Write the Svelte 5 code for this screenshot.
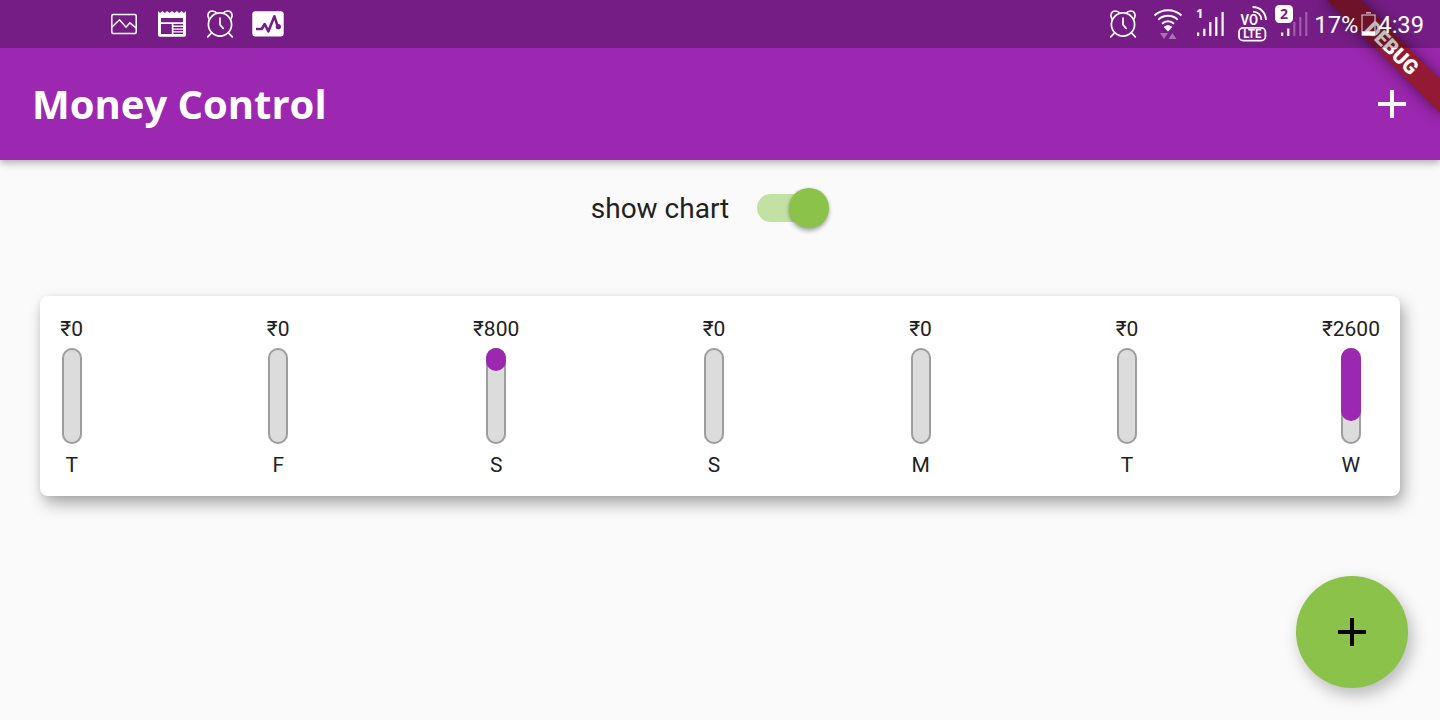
<script>
  const days = [
    { day: 'T', amount: 0 },
    { day: 'F', amount: 0 },
    { day: 'S', amount: 800 },
    { day: 'S', amount: 0 },
    { day: 'M', amount: 0 },
    { day: 'T', amount: 0 },
    { day: 'W', amount: 2600 }
  ];
  const total = days.reduce((sum, d) => sum + d.amount, 0);
  let showChart = $state(true);
</script>

{#snippet alarm()}
  <svg class="alarm" width="32" height="32" viewBox="0 0 32 32" fill="none" stroke="#fff" stroke-width="1.7" stroke-linecap="round">
    <circle cx="16" cy="16.5" r="11.6" />
    <path d="M16 10v6.8l3.2 3.6M7.3 25.2l-3.6 3.6M24.7 25.2l3.6 3.6M4.9 10.7C2.7 7.5 4.2 3.1 8.3 3c2 0 3.6.9 4.5 2.2M27.1 10.7c2.2-3.2.7-7.6-3.4-7.7-2 0-3.6.9-4.5 2.2" />
  </svg>
{/snippet}

<div class="app">
  <header class="statusbar">
    <div class="notifications">
      <svg width="32" height="32" viewBox="0 0 32 32" fill="none" stroke="#fff" stroke-width="1.5">
        <rect x="3.8" y="6.5" width="24.4" height="18.9" rx="1.2" />
        <path d="M4 19l7.500-7.200 6.500 7.400 3.900-4.400 6.100 5" />
      </svg>
      <svg width="32" height="32" viewBox="0 0 32 32">
        <path fill="#fff" fill-rule="evenodd" d="M2 3l2 2 2.4-2 2.4 2 2.4-2 2.4 2L16 3l2.4 2 2.4-2 2.4 2 2.4-2L28 5l2-2v24a1.8 1.8 0 0 1-1.8 1.8H3.8A1.8 1.8 0 0 1 2 27zM5 10v4.2h22V10zM5 16v10h10.8V16zM17.4 16v1.6H27V16zM17.4 19v1.5H27V19zM17.4 21.8v1.5H27v-1.5zM17.4 24.6V26H27v-1.4z" />
      </svg>
      {@render alarm()}
      <svg width="32" height="32" viewBox="0 0 32 32">
        <rect x="0.3" y="3.2" width="31.4" height="25.4" rx="3" fill="#fff" />
        <path d="M4 21h5.700l3-5 3.700 7.300 6-15 3.800 11.500" fill="none" stroke="#751d84" stroke-width="2.600" stroke-linejoin="round" />
        <circle cx="26.300" cy="18.700" r="2.600" fill="#751d84" />
      </svg>
    </div>

    <div class="system">
      {@render alarm()}
      <svg class="wifi" width="30" height="34" viewBox="0 0 30 34" fill="none" stroke="#fff" stroke-width="1.9">
        <path d="M1.500 9.500c7.500-7 19.500-7 27 0M5.300 13.700c5.400-5.200 14-5.200 19.400 0M9 17.700c3.400-3.200 8.600-3.200 12 0" />
        <path d="M15 25.500l-4.300-4.600c2.500-2.300 6.100-2.300 8.600 0z" fill="#fff" stroke="none" />
        <path d="M7 27h8l-4 6zM15.500 33h8l-4-6z" fill="#a970b4" stroke="none" />
      </svg>
      <svg class="signal" width="30" height="34" viewBox="0 0 30 34" fill="#fff">
        <text x="0" y="13" class="sim">1</text>
        <path d="M1 27.500h2.200v3.500H1zM7.200 23.800h2.200V31H7.200zM13.200 17h2.200v14h-2.200zM19.200 12h2.200v19h-2.200zM25.500 7h2.200v24h-2.200z" />
      </svg>
      <svg class="volte" width="30" height="36" viewBox="0 0 30 36" fill="none" stroke="#fff" stroke-width="2">
        <text x="3.500" y="18.600" class="vo" textLength="17.500" lengthAdjust="spacingAndGlyphs">VO</text>
        <path d="M16 5.700c4.700 0 8.300 3.300 8.500 8.300M15.500 1c7.500 0 13 5 13.500 13" stroke-width="1.800" />
        <rect x="2" y="21.800" width="26.400" height="12.800" rx="4.200" stroke-width="1.800" />
        <text x="15.200" y="32.200" class="lte" textLength="18" lengthAdjust="spacingAndGlyphs">LTE</text>
      </svg>
      <svg class="signal two" width="34" height="34" viewBox="0 0 34 34" fill="#fff">
        <rect x="0" y="0" width="18" height="18" rx="4.500" />
        <text x="9" y="14" class="simtwo">2</text>
        <path d="M6 27.500h2.200v3.500H6zM12.200 23.500h2.200V31h-2.200z" />
        <path d="M18.200 17h2.200v14h-2.200zM24.200 12h2.200v19h-2.200zM30.200 7h2.200v24h-2.200z" fill="#9c5ca7" />
      </svg>
      <span class="percent">17%</span>
      <svg class="battery" width="15" height="24" viewBox="0 0 15 24">
        <path d="M5 .8h5" stroke="#dda0c0" stroke-width="1.600" />
        <rect x="1" y="3" width="13" height="20" fill="none" stroke="#c9a9bd" stroke-width="1.300" />
        <path d="M1 19.300h13V23.500H1z" fill="#fff" />
      </svg>
      <span class="time">4:39</span>
    </div>
  </header>

  <div class="appbar">
    <h1>Money Control</h1>
    <button class="add" aria-label="Add transaction">
      <svg width="28" height="28" viewBox="0 0 28 28"><path d="M14 0v28M0 14h28" stroke="#fff" stroke-width="4" /></svg>
    </button>
    <div class="bannerclip"><div class="banner">DEBUG</div></div>
  </div>

  <main>
    <div class="toggle">
      <span>show chart</span>
      <button class="switch" class:on={showChart} role="switch" aria-checked={showChart} aria-label="show chart" onclick={() => (showChart = !showChart)}>
        <i></i>
      </button>
    </div>

    {#if showChart}
      <section class="card">
        {#each days as d}
          <div class="day">
            <span class="text">₹{d.amount}</span>
            <div class="bar">
              <div class="fill" style="height: {(d.amount / total) * 100}%"></div>
            </div>
            <span class="text">{d.day}</span>
          </div>
        {/each}
      </section>
    {/if}
  </main>

  <button class="fab" aria-label="Add new transaction">
    <svg width="28" height="28" viewBox="0 0 28 28"><path d="M14 0v28M0 14h28" stroke="#000" stroke-width="4" /></svg>
  </button>
</div>

<style>
  :global(body) {
    margin: 0;
  }
  .app {
    position: relative;
    width: 1440px;
    height: 720px;
    overflow: hidden;
    background: #fafafa;
    font-family: Roboto, 'Noto Sans', sans-serif;
    color: #212121;
    display: flex;
    flex-direction: column;
  }
  button {
    border: 0;
    padding: 0;
    background: none;
    display: flex;
    align-items: center;
    justify-content: center;
  }
  svg {
    display: block;
    flex: none;
  }
  .statusbar {
    position: relative;
    z-index: 3;
    height: 48px;
    flex: none;
    box-sizing: border-box;
    padding: 0 16px 0 108px;
    display: flex;
    justify-content: space-between;
    align-items: center;
    background: rgba(0, 0, 0, 0.25);
    color: #fff;
  }
  .notifications {
    display: flex;
    gap: 16px;
  }
  .system {
    display: flex;
    align-items: center;
    height: 48px;
  }
  .wifi {
    margin: 0 0 2px 14px;
  }
  .signal {
    margin: 0 0 4px 13px;
  }
  .volte {
    margin: 0 0 0 11px;
  }
  .signal.two {
    margin-left: 8px;
  }
  .sim {
    font: 700 13px 'Noto Sans', sans-serif;
  }
  .vo {
    font: 600 15px Roboto, sans-serif;
    fill: #fff;
    stroke: none;
  }
  .lte {
    font: 700 12px Roboto, sans-serif;
    text-anchor: middle;
    fill: #fff;
    stroke: none;
  }
  .simtwo {
    font: 700 14px 'Noto Sans', sans-serif;
    text-anchor: middle;
    fill: #751d84;
  }
  .percent,
  .time {
    font-size: 23.700px;
    line-height: 48px;
    padding-top: 2px;
  }
  .percent {
    margin-left: 5.500px;
  }
  .battery {
    margin-left: 3px;
  }
  .time {
    margin-left: 2px;
  }
  .appbar {
    position: relative;
    z-index: 2;
    flex: none;
    height: 160px;
    margin-top: -48px;
    padding: 48px 34px 0 32px;
    box-sizing: border-box;
    background: #9c27b0;
    display: flex;
    align-items: center;
    justify-content: space-between;
    box-shadow: 0 4px 8px rgba(0, 0, 0, 0.2), 0 2px 5px rgba(0, 0, 0, 0.1);
  }
  h1 {
    margin: 0;
    font: 700 40px/54px 'Open Sans', 'Noto Sans', sans-serif;
    color: #fff;
  }
  .bannerclip {
    position: absolute;
    right: 0;
    top: 0;
    width: 160px;
    height: 160px;
    overflow: hidden;
    pointer-events: none;
  }
  .banner {
    position: absolute;
    left: 80px;
    top: 56px;
    width: 160px;
    height: 24px;
    transform-origin: 80px -56px;
    transform: rotate(45deg);
    background: #931a35;
    box-shadow: 0 0 15px rgba(0, 0, 0, 0.5);
    color: #fff;
    font-size: 20.400px;
    font-weight: 900;
    line-height: 24px;
    text-align: center;
  }
  main {
    flex: 1;
    display: flex;
    flex-direction: column;
  }
  .toggle {
    height: 96px;
    display: flex;
    align-items: center;
    justify-content: center;
    gap: 28px;
    padding-right: 20px;
    font-size: 28px;
  }
  .switch {
    width: 72px;
    height: 28px;
    border-radius: 14px;
    background: linear-gradient(#c4e1a4, #c4e1a4) left / 66px 28px no-repeat;
    justify-content: flex-start;
  }
  .switch i {
    width: 40px;
    height: 40px;
    flex: none;
    border-radius: 50%;
    background: #fafafa;
    box-shadow: 0 3px 4px rgba(0, 0, 0, 0.3), 0 0 3px rgba(0, 0, 0, 0.12);
  }
  .switch.on i {
    margin-left: 32px;
    background: #8bc34a;
  }
  .card {
    margin: 40px 40px 0;
    height: 200px;
    box-sizing: border-box;
    padding: 20px;
    display: flex;
    justify-content: space-between;
    background: #fff;
    border-radius: 8px;
    box-shadow: 0 2px 6px rgba(0, 0, 0, 0.07), 4px 8px 16px rgba(0, 0, 0, 0.31);
  }
  .day {
    min-width: 23.400px;
    display: flex;
    flex-direction: column;
    align-items: center;
    gap: 8px;
  }
  .text {
    height: 24px;
    font-size: 21px;
    line-height: 26px;
  }
  .bar {
    width: 20px;
    height: 96px;
    border-radius: 10px;
    background: #dcdcdc;
    box-shadow: inset 0 0 0 2px #9e9e9e;
  }
  .fill {
    border-radius: 10px;
    background: #9c27b0;
  }
  .fab {
    position: absolute;
    right: 32px;
    bottom: 32px;
    width: 112px;
    height: 112px;
    border-radius: 50%;
    background: #8bc34a;
    box-shadow: 4px 7px 16px rgba(0, 0, 0, 0.26);
  }
</style>
